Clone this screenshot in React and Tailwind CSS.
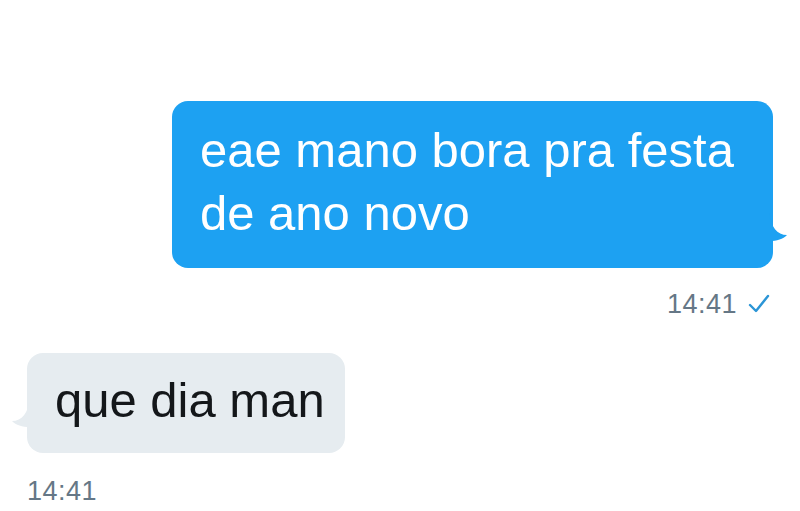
export default function App() {
  return (
    <div
      className="w-[800px] h-[511px] bg-white overflow-hidden flex flex-col"
      style={{ fontFamily: '"Liberation Sans", Arial, sans-serif' }}
    >
      <div className="flex justify-end pr-[27px] pt-[101px]">
        <div className="relative w-[601px] h-[167px] rounded-[16px] bg-[#1da1f2] pl-[28px] pt-[18px] text-white text-[49px] leading-[63px]">
          eae mano bora pra festa de ano novo
          <svg
            className="absolute right-[-18px] top-[112px]"
            width="22"
            height="36"
            viewBox="0 0 22 36"
          >
            <path d="M0 0 C2 14 8 22 18 22 C14 26 8 28 0 28 Z" fill="#1da1f2" />
          </svg>
        </div>
      </div>
      <div className="flex justify-end items-center gap-[11px] pr-[30px] mt-[22px] h-[28px] text-[27px] tracking-[0.5px] text-[#657786]">
        <span>14:41</span>
        <svg width="22" height="20" viewBox="0 0 22 20">
          <path d="M2 11 L8 17 L20 2" fill="none" stroke="#2b95d6" strokeWidth="2.4" strokeLinecap="round" strokeLinejoin="round" />
        </svg>
      </div>
      <div className="pl-[27px] mt-[35px]">
        <div className="relative w-[318px] h-[100px] rounded-[16px] bg-[#e6ecf0] pl-[28px] pt-[16px] text-[#14171a] text-[49px] leading-[63px]">
          que dia man
          <svg
            className="absolute left-[-19px] top-[46px]"
            width="22"
            height="36"
            viewBox="0 0 22 36"
          >
            <path d="M22 0 C20 14 14 22 4 22 C8 26 14 28 22 28 Z" fill="#e6ecf0" />
          </svg>
        </div>
      </div>
      <div className="pl-[27px] mt-[24px] text-[27px] tracking-[0.5px] text-[#657786] leading-[28px]">14:41</div>
    </div>
  );
}
